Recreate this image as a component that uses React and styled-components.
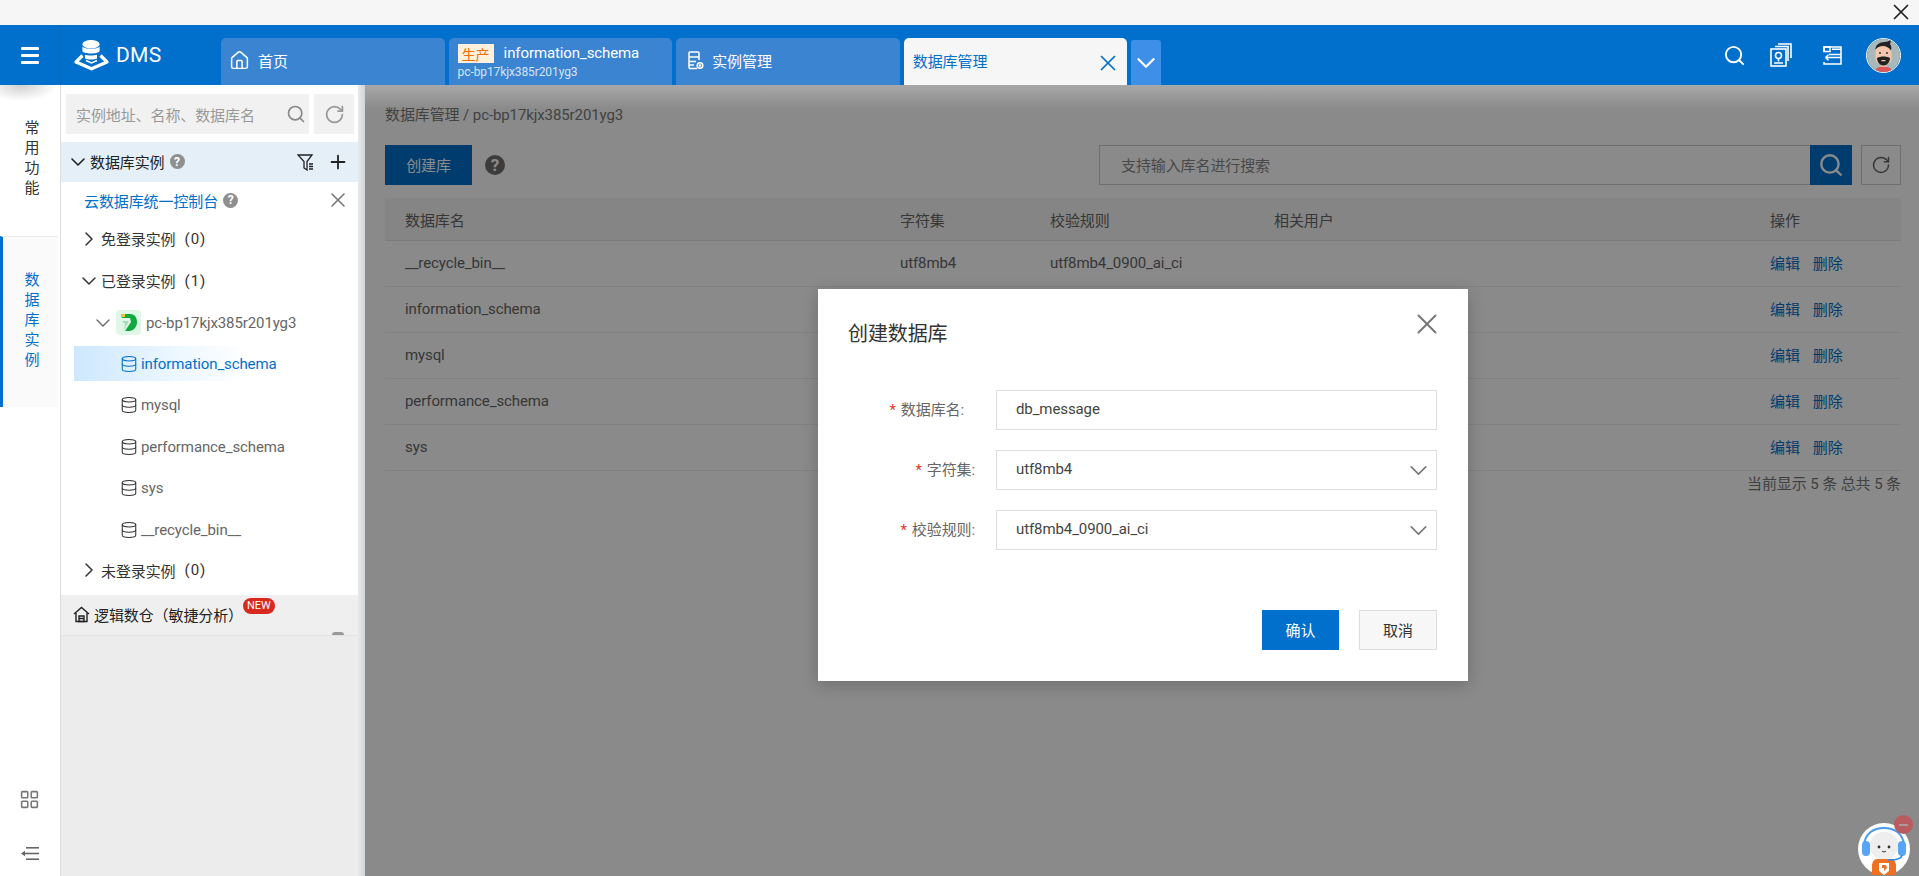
import React from "react";
import styled, { createGlobalStyle } from "styled-components";
import { ChevronDown, ChevronRight, Database, House, LayoutGrid, Plus, RotateCw, Search, X } from "lucide-react";

const GlobalStyle = createGlobalStyle`
  html, body {
    margin: 0;
    height: 100%;
    overflow: hidden;
    background: #fff;
  }
  * {
    box-sizing: border-box;
  }
  body {
    font-family: Roboto, "Noto Sans CJK SC", sans-serif;
    font-size: 15px;
    letter-spacing: -0.1px;
    color: #333;
  }
`;

const Page = styled.div`
  position: relative;
  display: flex;
  flex-direction: column;
  height: 100vh;
`;
const TopStrip = styled.div`
  display: flex;
  justify-content: flex-end;
  align-items: center;
  height: 25px;
  padding-right: 5px;
  background: #f6f6f6;
  color: #222;
  svg {
    margin-top: -2px;
  }
`;
const Header = styled.header`
  display: flex;
  height: 60px;
  background: #0070cc;
  color: #fff;
`;
const Burger = styled.div`
  display: flex;
  flex-direction: column;
  justify-content: center;
  gap: 4px;
  width: 61px;
  padding: 0 21px;
  border-right: 1px solid #0a68b8;
  i {
    display: block;
    height: 3px;
    background: #fff;
    border-radius: 1px;
  }
`;
const Logo = styled.div`
  display: flex;
  align-items: center;
  gap: 6px;
  width: 160px;
  padding-left: 12px;
  font-size: 21px;
  letter-spacing: 0.3px;
`;
const Tabs = styled.div`
  display: flex;
  align-items: flex-end;
  gap: 4px;
`;
const Tab = styled.div`
  position: relative;
  display: flex;
  align-items: center;
  gap: 8px;
  width: 223.6px;
  height: 47px;
  padding: 0 ${(p) => p.$pad || 8}px 2px;
  border-radius: 5px 5px 0 0;
  background: ${(p) => (p.$active ? "#f6f6f6" : "#3b84d2")};
  color: ${(p) => (p.$active ? "#0070cc" : "#fff")};
  svg.close {
    margin-left: auto;
    margin-right: -3px;
    margin-top: 4px;
  }
`;
const DoubleTab = styled(Tab)`
  display: block;
  padding: 6px 9px;
`;
const TabTop = styled.div`
  display: flex;
  align-items: center;
  gap: 10px;
  height: 19px;
`;
const TabTitle = styled.span`
  margin-top: -2px;
`;
const EnvBadge = styled.span`
  display: flex;
  align-items: center;
  justify-content: center;
  width: 36px;
  height: 19px;
  background: #fff0dc;
  color: #f56a00;
  font-size: 14px;
`;
const TabSub = styled.div`
  margin-top: 2px;
  font-size: 12px;
  line-height: 14px;
  color: #d4e4f5;
`;
const MoreTab = styled.div`
  display: flex;
  align-items: center;
  justify-content: center;
  width: 30px;
  height: 45px;
  border-radius: 3px 3px 0 0;
  background: #3d8fe8;
`;
const HeaderActions = styled.div`
  display: flex;
  align-items: center;
  gap: 24px;
  margin-left: auto;
  padding-right: 18px;
`;
const ActionIcon = styled.span`
  display: flex;
  margin-left: ${(p) => (p.$push ? "6px" : "0")};
`;
const Avatar = styled.div`
  width: 35px;
  height: 35px;
  margin-top: 1px;
  border-radius: 50%;
  overflow: hidden;
  border: 1px solid #fff;
  svg {
    display: block;
  }
`;

const Body = styled.div`
  display: flex;
  flex: 1;
  min-height: 0;
`;
const Rail = styled.aside`
  position: relative;
  display: flex;
  flex-direction: column;
  width: 61px;
  border-right: 1px solid #ddd;
  background: #fff;
  &::before {
    content: "";
    position: absolute;
    top: 0;
    left: 0;
    right: 0;
    height: 16px;
    background: radial-gradient(ellipse 60% 100% at 35% 0, #cfcfcf, rgba(255, 255, 255, 0));
  }
`;
const RailItem = styled.div`
  display: flex;
  justify-content: center;
  height: ${(p) => (p.$active ? "171px" : "151px")};
  margin-right: 2px;
  padding-top: ${(p) => (p.$active ? "33px" : "33px")};
  padding-left: ${(p) => (p.$active ? "3px" : "6px")};
  font-size: 15px;
  line-height: 20px;
  text-align: center;
  color: ${(p) => (p.$active ? "#0070cc" : "#333")};
  background: ${(p) => (p.$active ? "#fafafa" : "transparent")};
  border-left: ${(p) => (p.$active ? "3px solid #0070cc" : "0")};
  border-top: ${(p) => (p.$active ? "1px solid #eee" : "0")};
  span {
    width: 16px;
  }
`;
const RailBottom = styled.div`
  display: flex;
  flex-direction: column;
  align-items: center;
  gap: 37px;
  margin-top: auto;
  padding: 0 1px 16px 0;
  color: #777;
`;

const Tree = styled.div`
  display: flex;
  flex-direction: column;
  width: 297px;
  background: #fff;
`;
const Handle = styled.div`
  width: 7px;
  background: linear-gradient(90deg, #e8eaec, #cfd3d7);
`;
const TreeSearchRow = styled.div`
  display: flex;
  gap: 5px;
  padding: 9px 0 0 5px;
`;
const TreeSearch = styled.div`
  display: flex;
  align-items: center;
  justify-content: space-between;
  width: 243px;
  height: 40px;
  padding: 0 3px 0 10px;
  background: #f1f1f1;
  color: #999;
`;
const TreeRefresh = styled.div`
  display: flex;
  align-items: center;
  justify-content: center;
  width: 40px;
  height: 40px;
  background: #f1f1f1;
  color: #999;
`;
const SectionHead = styled.div`
  display: flex;
  align-items: center;
  height: 40px;
  margin-top: 8px;
  padding: 0 0 1px 5px;
  background: #e4eff8;
  color: #222;
`;
const HelpDot = styled.span`
  display: inline-flex;
  align-items: center;
  justify-content: center;
  flex: none;
  width: ${(p) => p.$size || 15}px;
  height: ${(p) => p.$size || 15}px;
  margin-left: ${(p) => p.$gap || 5}px;
  border-radius: 50%;
  background: ${(p) => p.$bg || "#8f8f8f"};
  color: ${(p) => p.$fg || "#fff"};
  font-size: ${(p) => (p.$size || 15) - 3}px;
  font-weight: 700;
`;
const HeadTools = styled.div`
  display: flex;
  align-items: center;
  gap: 13px;
  margin-left: auto;
  padding-right: 9px;
`;
const ConsoleLink = styled.div`
  display: flex;
  align-items: center;
  height: 36px;
  padding: 0 8px 0 23px;
  color: #0070cc;
  svg {
    margin-left: auto;
    color: #777;
  }
`;
const GroupRow = styled.div`
  display: flex;
  align-items: center;
  height: ${(p) => p.$h || 42}px;
  padding: 0 0 1px 16px;
  color: #333;
  em {
    margin-left: 9px;
    font-style: normal;
    letter-spacing: 1px;
  }
`;
const InstanceRow = styled.div`
  display: flex;
  align-items: center;
  height: 41px;
  padding-left: 30px;
  color: #666;
  svg.chev {
    margin-right: 1px;
  }
`;
const InstanceIcon = styled.span`
  display: flex;
  align-items: center;
  justify-content: center;
  width: 25px;
  height: 25px;
  margin-right: 5px;
  border-radius: 4px;
  background: #dff7e6;
`;
const DbList = styled.div`
  display: flex;
  flex-direction: column;
  gap: 6.6px;
  padding: 3px 0 3.6px 13px;
`;
const DbRow = styled.div`
  display: flex;
  align-items: center;
  gap: 3px;
  height: 35px;
  padding-left: 46px;
  color: ${(p) => (p.$active ? "#0070cc" : "#666")};
  background: ${(p) => (p.$active ? "linear-gradient(90deg, #cde8fe 0, #eff8ff 110px, #fff 176px)" : "none")};
  svg {
    color: ${(p) => (p.$active ? "#0070cc" : "#333")};
  }
`;
const LogicRow = styled.div`
  display: flex;
  align-items: center;
  gap: 4px;
  height: 41px;
  margin-top: 4px;
  padding-left: 12px;
  background: #efefef;
  border-bottom: 1px solid #e2e2e2;
  color: #222;
`;
const NewBadge = styled.span`
  align-self: flex-start;
  margin: 3px 0 0 -4px;
  padding: 0 4px;
  height: 16px;
  border-radius: 8px;
  background: #d9281e;
  color: #fff;
  font-size: 11px;
  line-height: 16px;
`;
const Peek = styled.span`
  align-self: flex-end;
  width: 12px;
  height: 3px;
  margin-left: auto;
  margin-right: 14px;
  border-radius: 6px 6px 0 0;
  background: #999;
`;
const TreeRest = styled.div`
  flex: 1;
  background: #ececec;
`;

const Main = styled.main`
  position: relative;
  flex: 1;
  padding: 20px 18px 0 20px;
  background: #fff;
  color: #666;
`;
const Crumb = styled.div`
  line-height: 20px;
  color: #7a7a7a;
`;
const Toolbar = styled.div`
  display: flex;
  align-items: center;
  height: 40px;
  margin-top: 20px;
`;
const PrimaryButton = styled.div`
  display: flex;
  align-items: center;
  justify-content: center;
  width: ${(p) => p.$w || 87}px;
  height: 40px;
  padding-bottom: 2px;
  background: #0070cc;
  color: #fff;
`;
const SearchBox = styled.div`
  display: flex;
  align-items: center;
  width: 711px;
  height: 40px;
  margin-left: auto;
  padding: 0 0 2px 21px;
  border: 1px solid #ccc;
  border-right: 0;
  color: #888;
`;
const SearchButton = styled.div`
  display: flex;
  align-items: center;
  justify-content: center;
  width: 42px;
  height: 40px;
  background: #0070cc;
  color: #fff;
`;
const RefreshButton = styled.div`
  display: flex;
  align-items: center;
  justify-content: center;
  width: 40px;
  height: 40px;
  margin-left: 9px;
  border: 1px solid #ccc;
  color: #666;
`;
const TableRow = styled.div`
  display: grid;
  grid-template-columns: 495px 150px 224px 496px 1fr;
  align-items: center;
  height: ${(p) => (p.$head ? "43px" : "46px")};
  margin-top: ${(p) => (p.$head ? "13px" : "0")};
  padding: 0 0 ${(p) => (p.$head ? "0" : "2px")} 20px;
  background: ${(p) => (p.$head ? "#f6f6f6" : "transparent")};
  border-bottom: 1px solid ${(p) => (p.$head ? "#e5e5e5" : "#eee")};
`;
const Ops = styled.div`
  display: flex;
  gap: 13px;
  color: #0070cc;
`;
const TableFoot = styled.div`
  margin-top: 3px;
  line-height: 20px;
  text-align: right;
  color: #777;
`;

const Overlay = styled.div`
  position: absolute;
  inset: 0;
  display: flex;
  align-items: center;
  justify-content: center;
  padding: 9px 0 0 2px;
  background: rgba(0, 0, 0, 0.46);
  &::before {
    content: "";
    position: absolute;
    top: 0;
    left: 0;
    right: 0;
    height: 24px;
    background: linear-gradient(rgba(255, 255, 255, 0.26), rgba(255, 255, 255, 0));
  }
`;
const Dialog = styled.div`
  width: 650px;
  padding: 30px 31px 31px 30px;
  background: #fff;
  color: #555;
  box-shadow: 0 4px 16px rgba(0, 0, 0, 0.2);
`;
const DialogHead = styled.div`
  display: flex;
  justify-content: space-between;
  height: 30px;
  h3 {
    margin: 0;
    font-size: 20px;
    font-weight: 400;
    line-height: 31px;
    color: #333;
  }
  svg {
    margin: -12px -7px 0 0;
    color: #777;
  }
`;
const Form = styled.div`
  display: flex;
  flex-direction: column;
  gap: 20px;
  margin-top: 41px;
`;
const Field = styled.div`
  display: grid;
  grid-template-columns: 127px 441px;
  column-gap: 21px;
  align-items: center;
`;
const Label = styled.label`
  padding-right: ${(p) => p.$inset || 0}px;
  padding-bottom: 3px;
  text-align: right;
  color: #666;
  b {
    margin-right: 5px;
    font-weight: 400;
    color: #e5352b;
  }
`;
const FieldBox = styled.div`
  display: flex;
  align-items: center;
  justify-content: space-between;
  height: 40px;
  padding: 0 3px 2px 19px;
  border: 1px solid #ddd;
  color: #444;
  svg {
    margin-top: 2px;
    color: #777;
  }
`;
const DialogFoot = styled.div`
  display: flex;
  justify-content: flex-end;
  gap: 20px;
  margin-top: 60px;
`;
const CancelButton = styled.div`
  display: flex;
  align-items: center;
  justify-content: center;
  width: 78px;
  height: 40px;
  padding-bottom: 2px;
  border: 1px solid #ddd;
  background: #f7f7f7;
  color: #333;
`;
const Robot = styled.div`
  position: absolute;
  right: 9px;
  bottom: 1px;
  width: 52px;
  height: 52px;
  svg {
    display: block;
  }
`;
const RobotDot = styled.span`
  position: absolute;
  top: -8px;
  right: -3px;
  width: 19px;
  height: 19px;
  border-radius: 50%;
  background: #b85c60;
  &::after {
    content: "";
    position: absolute;
    left: 5px;
    right: 5px;
    top: 8.5px;
    height: 2px;
    background: #a89a9a;
  }
`;

function LogoMark() {
  return (
    <svg width="37" height="31" viewBox="0 0 37 31" fill="none">
      <ellipse cx="18" cy="4.2" rx="8.6" ry="4.2" fill="#fff" />
      <path d="M9.4 6.6c1.8 3 15.4 3 17.2 0v4.6c-1.8 3-15.4 3-17.2 0Z" fill="#fff" />
      <path d="M12 14.8c3 1 9 1 12 0v3.6c-3 1.4-9 1.4-12 0Z" fill="#fff" />
      <path d="M9.5 15.5 3 22l15.5 6.8L34 22l-6.5-6.5" stroke="#fff" strokeWidth="3.2" strokeLinejoin="round" />
      <path d="M13 20.5 18.5 23l5.500-2.500" stroke="#fff" strokeWidth="1.4" />
    </svg>
  );
}

function InstanceMgmtIcon() {
  return (
    <svg width="16" height="19" viewBox="0 0 16 19" fill="none" stroke="#fff" strokeWidth="1.5">
      <path d="M9 17.5H2a1 1 0 0 1-1-1V2a1 1 0 0 1 1-1h8a1 1 0 0 1 1 1v7" />
      <path d="M1 6h10M1 10.5h7M1 14h5" />
      <circle cx="12" cy="14.5" r="2.8" />
      <circle cx="12" cy="14.5" r=".6" fill="#fff" />
    </svg>
  );
}

function StackIcon() {
  return (
    <svg width="22" height="24" viewBox="0 0 22 24" fill="none" stroke="#fff" strokeWidth="1.6">
      <rect x="1" y="6" width="15" height="17" />
      <circle cx="8.5" cy="12.5" r="3" />
      <path d="M8.5 15.5v3M4 20h9" />
      <path d="M5 3.5h13V18" />
      <path d="M8 1h13v14" />
    </svg>
  );
}

function PanelBackIcon() {
  return (
    <svg width="20" height="19" viewBox="0 0 20 19" fill="none" stroke="#fff" strokeWidth="1.5">
      <path d="M2 6V1h17v17H2v-2" />
      <rect x="2" y="1" width="6" height="4.5" />
      <path d="M10 3.2h9M19 8.5H7M3.5 11.5H19M3.5 11.5l3-2.8M3.5 11.5l3 2.8" />
    </svg>
  );
}

function FunnelIcon() {
  return (
    <svg width="17" height="18" viewBox="0 0 17 18" fill="none" stroke="#222" strokeWidth="1.3">
      <path d="M1 2h14l-5 6.5V17l-3-2V8.5Z" />
      <path d="M12 11h4M12 13.5h4M12 16h4" />
    </svg>
  );
}

function CollapseIcon() {
  return (
    <svg width="18" height="13" viewBox="0 0 18 13" fill="#666">
      <rect x="5" y="0" width="13" height="1.6" />
      <rect x="3" y="5.7" width="15" height="1.6" />
      <rect x="5" y="11.4" width="13" height="1.6" />
      <path d="M0 6.5 4 3.8v5.4Z" />
    </svg>
  );
}

function PolarIcon() {
  return (
    <svg width="19" height="19" viewBox="0 0 19 19">
      <path d="M2 1h9c4.5 0 7 3.4 7 8s-3 9-8 9H6l6-9-1-4H3Z" fill="#10a93f" />
      <path d="M2 1h4v3H3Z" fill="#e8c93a" />
      <path d="M3 8h7l-5 9 1-6Z" fill="#a8dcb6" />
    </svg>
  );
}

function LogicHomeIcon() {
  return (
    <svg width="17" height="17" viewBox="0 0 17 17" fill="none" stroke="#222" strokeWidth="1.4">
      <path d="M1 8 8.5 1.5 16 8" />
      <path d="M3 7v8.5h11V7" />
      <path d="M6 10h5v5.5H6ZM6 12.5h5" />
    </svg>
  );
}

function AvatarArt() {
  return (
    <svg width="33" height="33" viewBox="0 0 33 33">
      <rect width="33" height="33" fill="#a9b8b9" />
      <path d="M8 33c0-4 4-5.5 8.500-5.500S25 29 25 33Z" fill="#d9565c" />
      <rect x="13.5" y="22" width="6" height="6" fill="#e9b79f" />
      <rect x="8.5" y="7" width="16" height="18" rx="5" fill="#f2c6ad" />
      <path d="M10 19c2-1 4-1.5 6.500-1.500S21 18 23 19c0 4-3 7.500-6.500 7.500S10 23 10 19Z" fill="#222" />
      <path d="M14.5 21h4v1.200h-4Z" fill="#f2c6ad" />
      <path d="M8.5 11c-.5-5 4-8 9-8 2 0 4-1 6.500-2-.5 2-.5 3-1 4 1.500 2 1.500 4 1 6.500-2-3-5-4.500-8-4.500-3 0-6 1-7.500 4Z" fill="#232323" />
      <circle cx="13" cy="14" r=".9" fill="#222" />
      <circle cx="20" cy="14" r=".9" fill="#222" />
    </svg>
  );
}

function RobotArt() {
  return (
    <svg width="52" height="52" viewBox="0 0 52 52">
      <circle cx="26" cy="26" r="26" fill="#fff" />
      <path d="M26 36h7c3 0 5 3 5 7v9H14v-9c0-4 2-7 5-7Z" fill="#f0701f" />
      <path d="M21 40h10v8l-5 4-5-4Z" fill="#fff" />
      <path d="M24 42h4l1 3-3 3v-3h-2Z" fill="#f0701f" />
      <rect x="12" y="9" width="28" height="27" rx="13" fill="#efeeee" />
      <path d="M6 22C7 10 16 5 26 5s19 5 20 17" fill="none" stroke="#4a9af0" strokeWidth="2" />
      <rect x="4" y="18" width="8" height="15" rx="4" fill="#58a4f5" />
      <rect x="40" y="18" width="8" height="15" rx="4" fill="#58a4f5" />
      <path d="M44 32c0 3-4 5-14 5" fill="none" stroke="#2f86e2" strokeWidth="1.5" />
      <circle cx="21" cy="24" r="1.4" fill="#333" />
      <circle cx="31" cy="24" r="1.4" fill="#333" />
      <path d="M24 28c1 1.2 3 1.2 4 0" fill="none" stroke="#333" strokeWidth="1" />
    </svg>
  );
}

const rows = [
  { name: "__recycle_bin__", charset: "utf8mb4", collation: "utf8mb4_0900_ai_ci" },
  { name: "information_schema" },
  { name: "mysql" },
  { name: "performance_schema" },
  { name: "sys" },
];
const databases = ["information_schema", "mysql", "performance_schema", "sys", "__recycle_bin__"];

function App() {
  return (
    <Page>
      <GlobalStyle />
      <TopStrip>
        <X size={26} strokeWidth={1.6} />
      </TopStrip>
      <Header>
        <Burger>
          <i />
          <i />
          <i />
        </Burger>
        <Logo>
          <LogoMark />
          DMS
        </Logo>
        <Tabs>
          <Tab>
            <House size={21} strokeWidth={1.7} />
            首页
          </Tab>
          <DoubleTab>
            <TabTop>
              <EnvBadge>生产</EnvBadge>
              <TabTitle>information_schema</TabTitle>
            </TabTop>
            <TabSub>pc-bp17kjx385r201yg3</TabSub>
          </DoubleTab>
          <Tab $pad={12}>
            <InstanceMgmtIcon />
            实例管理
          </Tab>
          <Tab $active $pad={9}>
            数据库管理
            <X className="close" size={26} strokeWidth={1.6} />
          </Tab>
          <MoreTab>
            <ChevronDown size={32} strokeWidth={1.9} />
          </MoreTab>
        </Tabs>
        <HeaderActions>
          <ActionIcon>
            <Search size={23} strokeWidth={2} />
          </ActionIcon>
          <ActionIcon>
            <StackIcon />
          </ActionIcon>
          <ActionIcon $push>
            <PanelBackIcon />
          </ActionIcon>
          <Avatar>
            <AvatarArt />
          </Avatar>
        </HeaderActions>
      </Header>
      <Body>
        <Rail>
          <RailItem>
            <span>常用功能</span>
          </RailItem>
          <RailItem $active>
            <span>数据库实例</span>
          </RailItem>
          <RailBottom>
            <LayoutGrid size={21} strokeWidth={1.8} />
            <CollapseIcon />
          </RailBottom>
        </Rail>
        <Tree>
          <TreeSearchRow>
            <TreeSearch>
              实例地址、名称、数据库名
              <Search size={20} strokeWidth={2} color="#888" />
            </TreeSearch>
            <TreeRefresh>
              <RotateCw size={21} strokeWidth={2} />
            </TreeRefresh>
          </TreeSearchRow>
          <SectionHead>
            <ChevronDown size={24} strokeWidth={1.6} />
            数据库实例
            <HelpDot>?</HelpDot>
            <HeadTools>
              <FunnelIcon />
              <Plus size={22} strokeWidth={2} />
            </HeadTools>
          </SectionHead>
          <ConsoleLink>
            云数据库统一控制台
            <HelpDot>?</HelpDot>
            <X size={24} strokeWidth={1.6} />
          </ConsoleLink>
          <GroupRow>
            <ChevronRight size={24} strokeWidth={1.5} />
            免登录实例<em>(0)</em>
          </GroupRow>
          <GroupRow>
            <ChevronDown size={24} strokeWidth={1.5} />
            已登录实例<em>(1)</em>
          </GroupRow>
          <InstanceRow>
            <ChevronDown className="chev" size={24} strokeWidth={1.4} color="#666" />
            <InstanceIcon>
              <PolarIcon />
            </InstanceIcon>
            pc-bp17kjx385r201yg3
          </InstanceRow>
          <DbList>
            {databases.map((name, i) => (
              <DbRow key={name} $active={i === 0}>
                <Database size={18} strokeWidth={1.4} />
                {name}
              </DbRow>
            ))}
          </DbList>
          <GroupRow $h={40}>
            <ChevronRight size={24} strokeWidth={1.5} />
            未登录实例<em>(0)</em>
          </GroupRow>
          <LogicRow>
            <LogicHomeIcon />
            逻辑数仓（敏捷分析）
            <NewBadge>NEW</NewBadge>
            <Peek />
          </LogicRow>
          <TreeRest />
        </Tree>
        <Handle />
        <Main>
          <Crumb>数据库管理 / pc-bp17kjx385r201yg3</Crumb>
          <Toolbar>
            <PrimaryButton>创建库</PrimaryButton>
            <HelpDot $size={20} $gap={13} $bg="#6f6f6f">
              ?
            </HelpDot>
            <SearchBox>支持输入库名进行搜索</SearchBox>
            <SearchButton>
              <Search size={26} strokeWidth={2.2} />
            </SearchButton>
            <RefreshButton>
              <RotateCw size={20} strokeWidth={1.8} />
            </RefreshButton>
          </Toolbar>
          <TableRow $head>
            <span>数据库名</span>
            <span>字符集</span>
            <span>校验规则</span>
            <span>相关用户</span>
            <span>操作</span>
          </TableRow>
          {rows.map((row) => (
            <TableRow key={row.name}>
              <span>{row.name}</span>
              <span>{row.charset}</span>
              <span>{row.collation}</span>
              <span />
              <Ops>
                <span>编辑</span>
                <span>删除</span>
              </Ops>
            </TableRow>
          ))}
          <TableFoot>当前显示 5 条 总共 5 条</TableFoot>
          <Overlay>
            <Dialog>
              <DialogHead>
                <h3>创建数据库</h3>
                <X size={34} strokeWidth={1.4} />
              </DialogHead>
              <Form>
                <Field>
                  <Label $inset={11}>
                    <b>*</b>数据库名:
                  </Label>
                  <FieldBox>db_message</FieldBox>
                </Field>
                <Field>
                  <Label>
                    <b>*</b>字符集:
                  </Label>
                  <FieldBox>
                    utf8mb4
                    <ChevronDown size={29} strokeWidth={1.3} />
                  </FieldBox>
                </Field>
                <Field>
                  <Label>
                    <b>*</b>校验规则:
                  </Label>
                  <FieldBox>
                    utf8mb4_0900_ai_ci
                    <ChevronDown size={29} strokeWidth={1.3} />
                  </FieldBox>
                </Field>
              </Form>
              <DialogFoot>
                <PrimaryButton $w={77}>确认</PrimaryButton>
                <CancelButton>取消</CancelButton>
              </DialogFoot>
            </Dialog>
          </Overlay>
        </Main>
      </Body>
      <Robot>
        <RobotArt />
        <RobotDot />
      </Robot>
    </Page>
  );
}

export default App;
